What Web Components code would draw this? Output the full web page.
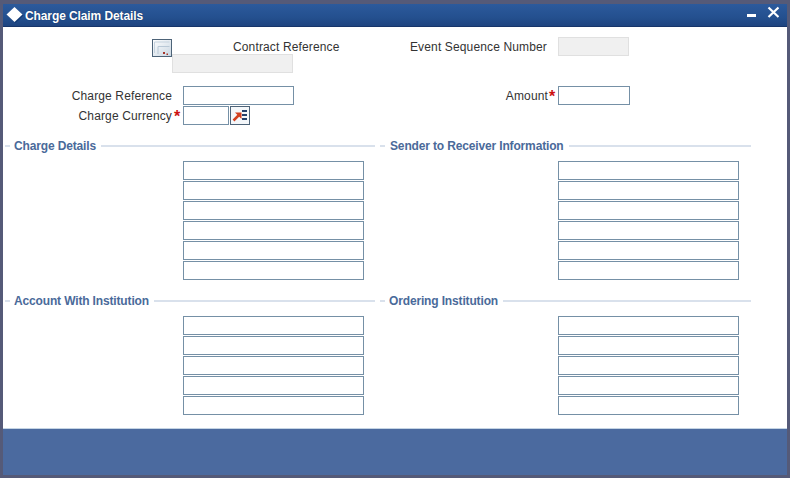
<!DOCTYPE html>
<html><head><meta charset="utf-8"><title>Charge Claim Details</title>
<style>
html,body{margin:0;padding:0;width:790px;height:478px;overflow:hidden;background:#555a78;font:12px "Liberation Sans",Arial,sans-serif}
</style></head><body>
<x-window heading="Charge Claim Details">
  <x-top></x-top>
  <x-section style="margin-top:12px">
    <x-group title-text="Charge Details" rows="6" width="372" lead="2" after="5" pad="7"></x-group>
    <x-group title-text="Sender to Receiver Information" rows="6" width="371" pad="7" gap="5"></x-group>
  </x-section>
  <x-section style="margin-top:13px">
    <x-group title-text="Account With Institution" rows="5" width="372" lead="2" after="5" pad="7"></x-group>
    <x-group title-text="Ordering Institution" rows="5" width="371" pad="7" gap="4"></x-group>
  </x-section>
</x-window>
<script>
function def(name,css,html){
  customElements.define(name,class extends HTMLElement{
    constructor(){super();this.attachShadow({mode:'open'});}
    connectedCallback(){this.shadowRoot.innerHTML='<style>'+css+'</style>'+(typeof html==='function'?html(this):html);}
  });
}
const FIELD='box-sizing:border-box;display:block;height:19px;margin:0;padding:0 2px;background:#fff;border:1px solid #7590a6;border-radius:0;outline:none;font:12px "Liberation Sans",Arial,sans-serif;';

def('x-window',`
:host{display:flex;flex-direction:column;box-sizing:border-box;width:790px;height:478px;padding:4px 3px 3px;background:#555a78;color:#333}
.title{flex:none;box-sizing:border-box;height:23px;display:flex;align-items:center;background:linear-gradient(#2c5a9c,#24508f 60%,#1e4480);border-bottom:1px solid #17356a;color:#fff;padding-left:3px}
.title b{font-size:12px;font-weight:bold;letter-spacing:-.1px;line-height:14px;padding-top:2px;text-shadow:0 0 1px #0c2a5a}
.title svg{display:block;flex:none}
.sp{flex:1}
.ctl{margin-right:8px}
main{flex:1;background:#fff;min-height:0}
footer{flex:none;box-sizing:border-box;height:47px;background:#4b6a9f;border-top:1px solid #c4d4e4}
`,h=>`<div class="title">
<svg width="19" height="18" viewBox="0 0 19 18"><path d="M9.500 2l8 7.500-8 7.500-8-7.500z" fill="#123a75"/><path d="M8.500 1l8 7.500-8 7.500-8-7.500z" fill="#fff"/></svg>
<b>${h.getAttribute('heading')}</b><span class="sp"></span>
<svg width="41" height="18" viewBox="0 0 41 18" class="ctl"><path d="M9 8h9v3H9z" fill="#fff"/><path d="M30.500 1.500l10 9.500M40.500 1.500l-10 9.500" stroke="#fff" stroke-width="2.200" fill="none"/></svg>
</div><main><slot></slot></main><footer></footer>`);

def('x-top',`
:host{display:grid;box-sizing:border-box;padding-top:10px;grid-template-columns:149px 20px 61px 60px 46px 71px 148px 71px;grid-template-rows:17px 19px;color:#333;letter-spacing:.14px}
.btn{grid-column:2;grid-row:1/3;align-self:start;margin-top:2px;display:block}
.cr{grid-column:4/6;grid-row:1;line-height:20px;white-space:nowrap}
.dis{grid-column:3/5;grid-row:2;${FIELD}width:121px;background:#f0f0f0;border-color:#e0e0e0}
.evl{grid-column:6/8;grid-row:1;text-align:right;padding-right:11px;line-height:20px;white-space:nowrap}
.evi{grid-column:8;grid-row:1/3;align-self:start;${FIELD}width:71px;background:#f0f0f0;border-color:#e0e0e0}
.rows{grid-column:1/-1;grid-row:3;margin-top:13px;display:grid;grid-template-columns:169px 11px 111px 254px 10px 72px;grid-auto-rows:20px;align-items:start}
.l{text-align:right;line-height:20px;white-space:nowrap}
.s{color:#cc1111;font-weight:bold;font-size:16px;line-height:21px}
.f{${FIELD}}
.cur{display:flex;gap:1px}
.cur svg{display:block}
`,`<svg class="btn" width="20" height="18" viewBox="0 0 20 18"><defs><linearGradient id="g" x1="0" y1="0" x2="1" y2="1"><stop offset="0" stop-color="#fff"/><stop offset="1" stop-color="#c9d6e2"/></linearGradient></defs><rect x=".5" y=".5" width="19" height="17" fill="url(#g)" stroke="#4d6378"/><path d="M2.500 14V3h15" fill="none" stroke="#c5d2de"/><path d="M6 15V7.500h11.500" fill="none" stroke="#b9c8d6"/><path d="M11 13h2v2h-2zM14.500 14.500h1.500v1.500h-1.500z" fill="#a5352b"/></svg>
<span class="cr">Contract Reference</span><input class="dis" disabled aria-label="Contract Reference">
<span class="evl">Event Sequence Number</span><input class="evi" disabled aria-label="Event Sequence Number">
<div class="rows">
<span class="l">Charge Reference</span><span></span><input class="f" style="width:111px" aria-label="Charge Reference"><span class="l" style="grid-column:4">Amount</span><span class="s" style="grid-column:5;padding-left:1px">*</span><input class="f" style="width:72px;grid-column:6;margin-left:0" aria-label="Amount">
<span class="l">Charge Currency</span><span class="s" style="padding-left:2px">*</span><span class="cur"><input class="f" style="width:46px" aria-label="Charge Currency"><svg width="20" height="19" viewBox="0 0 20 19"><rect x=".5" y=".5" width="19" height="18" fill="#f4f7fa" stroke="#4d6378"/><path d="M3.500 14.500l6-6" stroke="#d2401f" stroke-width="2.500"/><path d="M5 6.500h6.500V13z" fill="#d2401f"/><path d="M12 4h5v2h-5zM12 8h5v2h-5zM12 12h5v2h-5z" fill="#24406b"/></svg></span>
</div>`);

def('x-section',`:host{display:flex;align-items:flex-start}`,`<slot></slot>`);

def('x-group',`
:host{display:block;flex:none}
.h{box-sizing:border-box;display:flex;align-items:center;height:16px;color:#4a6a9a;font-weight:bold;white-space:nowrap;letter-spacing:-.15px}
.d,.n{display:block;height:2px;background:#d9e1ec}
.d{width:5px}
.n{flex:1;margin-left:5px}
.b{display:flex;flex-direction:column;gap:1px}
input{${FIELD}width:181px;margin-left:var(--x)}
`,h=>{
  const r=+h.getAttribute('rows');let s='';
  const t=h.getAttribute('title-text');
  for(let i=0;i<r;i++)s+='<input aria-label="'+t+' '+(i+1)+'">';
  const w=+h.getAttribute('width'),lead=+(h.getAttribute('lead')||0),after=+(h.getAttribute('after')||0);
  h.style.marginRight=after+'px';
  h.style.setProperty('--x',(lead?180:178)+'px');
  return `<div class="h" style="width:${w}px;padding-left:${lead}px"><i class="d" style="margin-right:${h.getAttribute('gap')||4}px"></i><span>${t}</span><i class="n"></i></div><div class="b" style="padding-top:${h.getAttribute('pad')}px">${s}</div>`;
});
</script>
</body></html>
